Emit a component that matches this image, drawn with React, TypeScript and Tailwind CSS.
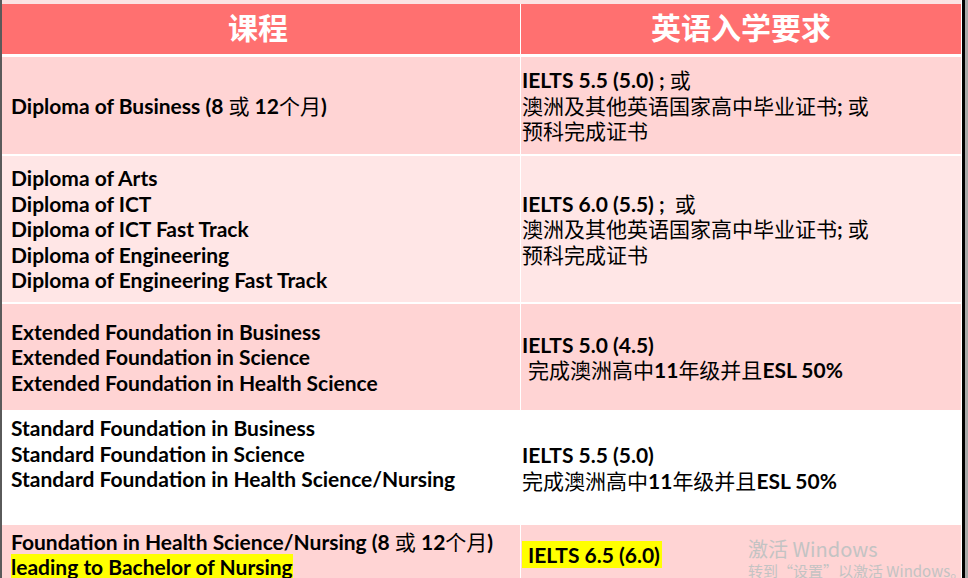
import React from "react";

const en = "font-['Lato','Noto_Sans_CJK_SC',sans-serif]";
const cjk = "font-['Noto_Sans_CJK_SC',sans-serif] font-normal";

const Zh = ({ children }: { children: React.ReactNode }) => (
  <span className={`${cjk} text-[21px]`}>{children}</span>
);

interface RowProps {
  bg: string;
  height: string;
  left: React.ReactNode;
  right: React.ReactNode;
}

const Row = ({ bg, height, left, right }: RowProps) => (
  <div className={`flex shrink-0 ${height} gap-px`}>
    <div className={`w-[518px] ${bg} flex flex-col justify-center pl-[9px]`}>
      {left}
    </div>
    <div className={`flex-1 ${bg} flex flex-col justify-center pl-px`}>
      {right}
    </div>
  </div>
);

const Lines = ({ items }: { items: string[] }) => (
  <div className="text-[21px] leading-[25.5px] font-bold text-black">
    {items.map((t) => (
      <div key={t}>{t}</div>
    ))}
  </div>
);

const App = () => {
  return (
    <div className={`relative flex w-[968px] h-[578px] overflow-hidden bg-white ${en}`}>
      <div className="w-[2px] shrink-0 bg-[#5a5a5a]" />
      <div className="w-[959px] shrink-0 flex flex-col bg-white">
        <div className="h-[4px] shrink-0 bg-[#fbe3e3]" />
        {/* header */}
        <div className="flex shrink-0 h-[50px] gap-px mb-[3px]">
          <div className="w-[518px] bg-[#ff7070] flex items-center justify-center pb-[5px] pr-[6px]">
            <span className="font-['Noto_Sans_CJK_SC',sans-serif] font-bold text-[30px] text-white">
              课程
            </span>
          </div>
          <div className="flex-1 bg-[#ff7070] flex items-center justify-center pb-[5px]">
            <span className="font-['Noto_Sans_CJK_SC',sans-serif] font-bold text-[30px] text-white">
              英语入学要求
            </span>
          </div>
        </div>

        <div className="flex flex-col shrink-0 gap-[2px]">
          <Row
            bg="bg-[#ffd4d4]"
            height="h-[97px]"
            left={
              <div className="text-[21px] font-bold leading-[25.5px]">
                Diploma of Business (8 <Zh>或</Zh> 12<Zh>个月</Zh>)
              </div>
            }
            right={
              <div className="text-[21px] leading-[25.5px] font-bold">
                <div>
                  IELTS 5.5 (5.0) ; <Zh>或</Zh>
                </div>
                <div>
                  <Zh>澳洲及其他英语国家高中毕业证书</Zh>; <Zh>或</Zh>
                </div>
                <div>
                  <Zh>预科完成证书</Zh>
                </div>
              </div>
            }
          />
          <Row
            bg="bg-[#ffe6e6]"
            height="h-[146px]"
            left={
              <Lines
                items={[
                  "Diploma of Arts",
                  "Diploma of ICT",
                  "Diploma of ICT Fast Track",
                  "Diploma of Engineering",
                  "Diploma of Engineering Fast Track",
                ]}
              />
            }
            right={
              <div className="text-[21px] leading-[25.5px] font-bold">
                <div>
                  IELTS 6.0 (5.5) ; &nbsp;<Zh>或</Zh>
                </div>
                <div>
                  <Zh>澳洲及其他英语国家高中毕业证书</Zh>; <Zh>或</Zh>
                </div>
                <div>
                  <Zh>预科完成证书</Zh>
                </div>
              </div>
            }
          />
          <Row
            bg="bg-[#ffd4d4]"
            height="h-[106px]"
            left={
              <Lines
                items={[
                  "Extended Foundation in Business",
                  "Extended Foundation in Science",
                  "Extended Foundation in Health Science",
                ]}
              />
            }
            right={
              <div className="text-[21px] leading-[25.5px] font-bold">
                <div>IELTS 5.0 (4.5)</div>
                <div className="pl-[6px]">
                  <Zh>完成澳洲高中</Zh>11<Zh>年级并且</Zh>ESL 50%
                </div>
              </div>
            }
          />
          <Row
            bg="bg-white"
            height="h-[111px]"
            left={
              <div className="pb-[28px]">
                <Lines
                  items={[
                    "Standard Foundation in Business",
                    "Standard Foundation in Science",
                    "Standard Foundation in Health Science/Nursing",
                  ]}
                />
              </div>
            }
            right={
              <div className="text-[21px] leading-[25.5px] font-bold">
                <div>IELTS 5.5 (5.0)</div>
                <div>
                  <Zh>完成澳洲高中</Zh>11<Zh>年级并且</Zh>ESL 50%
                </div>
              </div>
            }
          />
          <Row
            bg="bg-[#ffd4d4]"
            height="h-[55px]"
            left={
              <div className="text-[21px] leading-[25px] font-bold pt-[3px]">
                <div>
                  Foundation in Health Science/Nursing (8 <Zh>或</Zh> 12
                  <Zh>个月</Zh>)
                </div>
                <div>
                  <span className="bg-[#ffff00]">leading to Bachelor of Nursing</span>
                </div>
              </div>
            }
            right={
              <div className="text-[21px] leading-[25.5px] font-bold">
                <div className="mt-[4px]">
                  <span className="bg-[#ffff00] pl-[6px] pr-[2px] py-[1px]">IELTS 6.5 (6.0)</span>
                </div>
              </div>
            }
          />
        </div>
      </div>
      <div className="w-px shrink-0 bg-white" />
      <div className="w-[3px] shrink-0 bg-black" />
      <div className="flex-1 bg-[#a8a8a8]" />

      {/* windows activation watermark */}
      <div className="absolute left-[748px] top-[539px] text-[#c3c3c3] font-['Noto_Sans_CJK_SC',sans-serif] leading-none">
        <div className="text-[20px]">激活 Windows</div>
        <div className="text-[15px] mt-[4px]">转到“设置”以激活 Windows。</div>
      </div>
    </div>
  );
};

export default App;
